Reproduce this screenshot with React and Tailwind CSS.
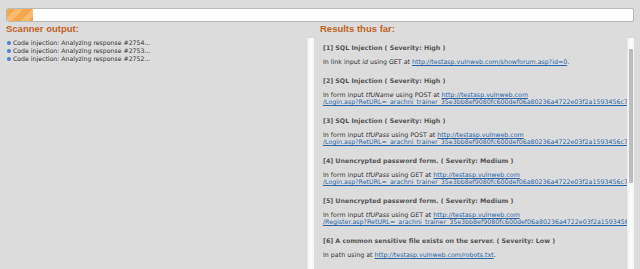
import React from "react";

const scanLines = [
  "Code injection: Analyzing response #2754...",
  "Code injection: Analyzing response #2753...",
  "Code injection: Analyzing response #2752...",
];

const rtUrl =
  "RetURL=_arachni_trainer_35e3bb8ef9080fc600def06a80236a4722e03f2a1593456c7ade";

const issues = [
  {
    title: "[1] SQL Injection ( Severity: High )",
    kind: "link",
    input: "id",
    method: "GET",
    url: ["http://testasp.vulnweb.com/showforum.asp?id=0"],
  },
  {
    title: "[2] SQL Injection ( Severity: High )",
    kind: "form",
    input: "tfUName",
    method: "POST",
    url: ["http://testasp.vulnweb.com", "/Login.asp?" + rtUrl],
  },
  {
    title: "[3] SQL Injection ( Severity: High )",
    kind: "form",
    input: "tfUPass",
    method: "POST",
    url: ["http://testasp.vulnweb.com", "/Login.asp?" + rtUrl],
  },
  {
    title: "[4] Unencrypted password form. ( Severity: Medium )",
    kind: "form",
    input: "tfUPass",
    method: "GET",
    url: ["http://testasp.vulnweb.com", "/Login.asp?" + rtUrl],
  },
  {
    title: "[5] Unencrypted password form. ( Severity: Medium )",
    kind: "form",
    input: "tfUPass",
    method: "GET",
    url: ["http://testasp.vulnweb.com", "/Register.asp?" + rtUrl],
  },
  {
    title: "[6] A common sensitive file exists on the server. ( Severity: Low )",
    kind: "path",
    url: ["http://testasp.vulnweb.com/robots.txt"],
  },
];

const Issue = ({ issue }) => {
  const link = "text-[#2a64a8] underline";
  return (
    <div className="mb-[11px]">
      <div className="text-[6.3px] font-bold text-[#555] leading-[10px] mb-[5px]">
        {issue.title}
      </div>
      <div className="text-[6.3px] text-[#333] leading-[7px] whitespace-nowrap">
        {issue.kind === "path" ? (
          <>
            In path using at <a className={link}>{issue.url[0]}</a>.
          </>
        ) : (
          <>
            In {issue.kind} input <i>{issue.input}</i> using {issue.method} at{" "}
            <a className={link}>{issue.url[0]}</a>
            {issue.url.length === 1 ? "." : null}
            {issue.url[1] && (
              <>
                <br />
                <a className={link}>{issue.url[1]}</a>
              </>
            )}
          </>
        )}
      </div>
    </div>
  );
};

export default function App() {
  return (
    <div
      className="w-[640px] h-[269px] overflow-hidden bg-[#dcdcdc] px-[6px] pt-[8px] flex flex-col"
      style={{ fontFamily: '"DejaVu Sans", Verdana, sans-serif' }}
    >
      {/* progress bar */}
      <div className="h-[14px] w-[628px] shrink-0 bg-white border border-[#b8b8b8] rounded-[2px] overflow-hidden">
        <div className="h-full w-[26px] bg-[repeating-linear-gradient(135deg,#f8a64c_0px,#f8a64c_6px,#fbbb6c_6px,#fbbb6c_12px)]" />
      </div>

      <div className="flex flex-1 min-h-0 w-[628px]">
        {/* left column */}
        <div className="w-[308px] shrink-0 flex flex-col">
          <h2
            className="text-[9.5px] font-bold text-[#c2621f] leading-[14px] h-[14px]"
            style={{ fontFamily: '"Liberation Sans", Arial, sans-serif' }}
          >
            Scanner output:
          </h2>
          <div className="flex flex-1 min-h-0 mt-[2px]">
            <ul className="flex-1 pt-[1px] pl-[1px]">
              {scanLines.map((l) => (
                <li
                  key={l}
                  className="flex items-center gap-[2px] text-[6.2px] text-[#333] leading-[8px] h-[8px]"
                >
                  <span className="w-[4px] h-[4px] rounded-full bg-[#4a7fd0]" />
                  {l}
                </li>
              ))}
            </ul>
            <div className="w-[7px] bg-[linear-gradient(90deg,#eaeaea,#ffffff,#f4f4f4)]" />
          </div>
        </div>

        {/* right column */}
        <div className="flex-1 min-w-0 flex flex-col">
          <h2
            className="text-[9.5px] font-bold text-[#c2621f] leading-[14px] h-[14px] pl-[6px]"
            style={{ fontFamily: '"Liberation Sans", Arial, sans-serif' }}
          >
            Results thus far:
          </h2>
          <div className="flex flex-1 min-h-0 mt-[2px]">
            <div className="flex-1 min-w-0 overflow-hidden pl-[9px] pt-[5px]">
              {issues.map((i) => (
                <Issue key={i.title} issue={i} />
              ))}
            </div>
            <div className="w-[7px] shrink-0 bg-[linear-gradient(90deg,#eaeaea,#ffffff,#f4f4f4)] pt-[11px] flex justify-center">
              <div className="w-[4px] h-[134px] bg-[#bdbdbd] rounded-[1px]" />
            </div>
          </div>
        </div>
      </div>
    </div>
  );
}
